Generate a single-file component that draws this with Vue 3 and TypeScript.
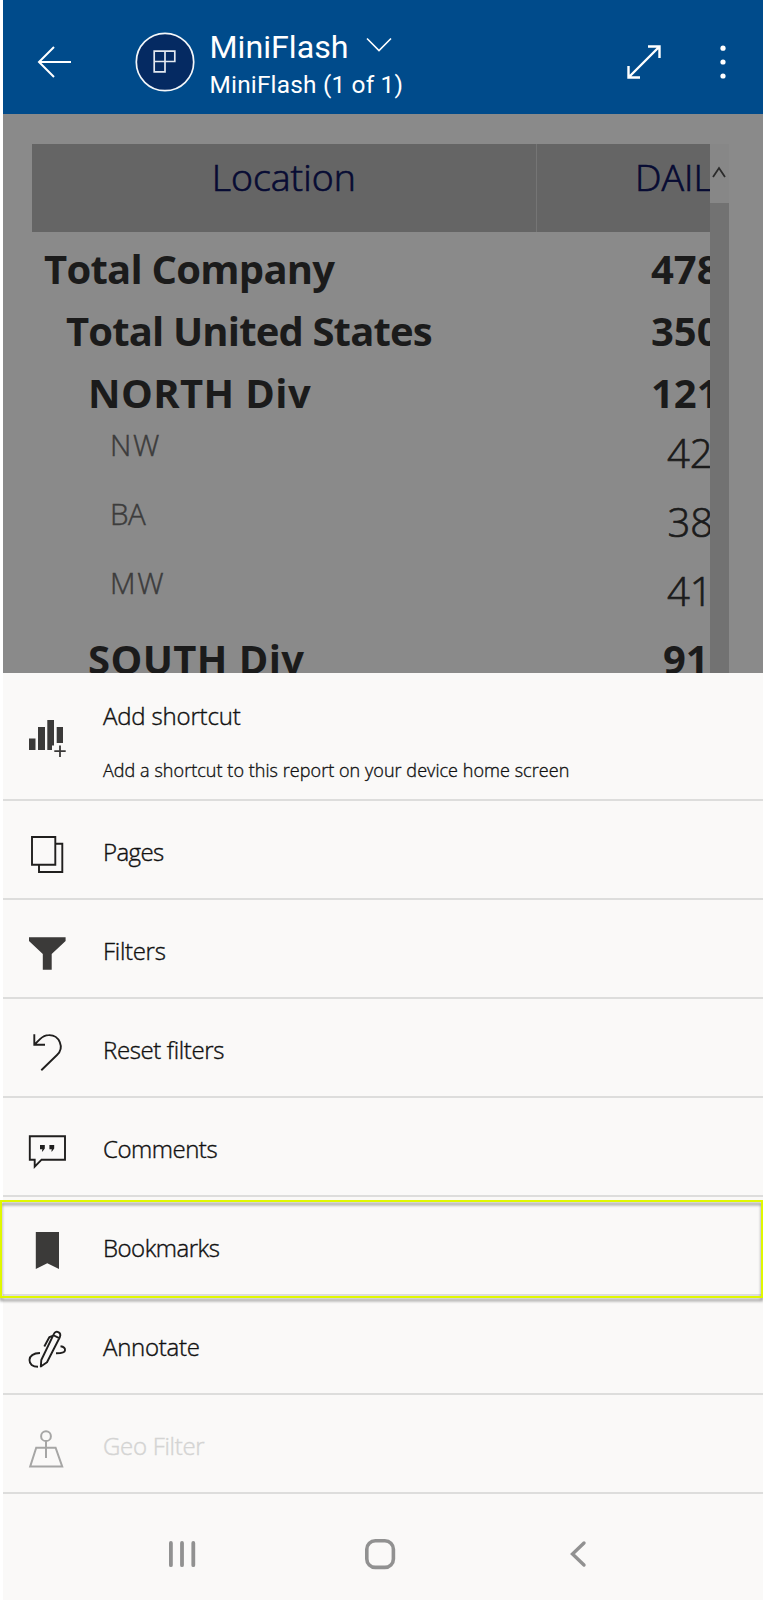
<script setup lang="ts">
interface ReportRow {
  name: string
  value: string
  indent: number
  valueIndent: number
  spacing: number
  kind: 'total' | 'leaf'
}

interface MenuItem {
  label: string
  icon: string
  spacing: number
  disabled?: boolean
  highlighted?: boolean
}

const rows: ReportRow[] = [
  { name: 'Total Company', value: '478', indent: 12, valueIndent: 115, spacing: -0.75, kind: 'total' },
  { name: 'Total United States', value: '350', indent: 34, valueIndent: 115, spacing: -0.85, kind: 'total' },
  { name: 'NORTH Div', value: '121', indent: 56, valueIndent: 115, spacing: 0.4, kind: 'total' },
  { name: 'NW', value: '42', indent: 78, valueIndent: 131, spacing: 1.8, kind: 'leaf' },
  { name: 'BA', value: '38', indent: 78, valueIndent: 131.5, spacing: -0.6, kind: 'leaf' },
  { name: 'MW', value: '41', indent: 78, valueIndent: 131, spacing: 1.8, kind: 'leaf' },
  { name: 'SOUTH Div', value: '91', indent: 56, valueIndent: 127, spacing: 0.4, kind: 'total' },
]

const items: MenuItem[] = [
  { label: 'Pages', icon: 'pages', spacing: -0.6 },
  { label: 'Filters', icon: 'filter', spacing: -0.3 },
  { label: 'Reset filters', icon: 'reset', spacing: -0.37 },
  { label: 'Comments', icon: 'comment', spacing: -0.48 },
  { label: 'Bookmarks', icon: 'bookmark', spacing: -0.5, highlighted: true },
  { label: 'Annotate', icon: 'annotate', spacing: -0.25 },
  { label: 'Geo Filter', icon: 'geo', spacing: -0.3, disabled: true },
]
</script>

<template>
  <div class="screen">
    <header class="bar">
      <svg class="back" width="36" height="34" viewBox="0 0 36 34" fill="none" stroke="#fff" stroke-width="2">
        <path d="M34 17H2M17 2L2 17L17 32" />
      </svg>
      <svg class="badge" width="60" height="60" viewBox="0 0 60 60" fill="none">
        <circle cx="30" cy="30" r="28.7" fill="#052a62" stroke="#f4f7fa" stroke-width="1.7" />
        <path d="M19.2 19.2H39.8V29.5H30V39.8H19.2ZM30 19.2V29.5M19.2 29.5H30" stroke="#e4e9f0" stroke-width="1.7" />
      </svg>
      <div class="titles">
        <div class="title-line">
          <span class="title">MiniFlash</span>
          <svg width="26" height="16" viewBox="0 0 26 16" fill="none" stroke="#fff" stroke-width="1.6">
            <path d="M1 1.5L13 13.5L25 1.5" />
          </svg>
        </div>
        <div class="subtitle">MiniFlash (1 of 1)</div>
      </div>
      <svg class="expand" width="34" height="34" viewBox="0 0 34 34" fill="none" stroke="#fff" stroke-width="2.4">
        <path d="M1.5 32.5L32.5 1.5M21 1.5H32.5V13M1.5 21V32.5H13" />
      </svg>
      <svg class="more" width="6" height="34" viewBox="0 0 6 34" fill="#fff">
        <circle cx="3" cy="3.2" r="2.6" />
        <circle cx="3" cy="17" r="2.6" />
        <circle cx="3" cy="31" r="2.6" />
      </svg>
    </header>

    <section class="report">
      <div class="table">
        <div class="table-head">
          <div class="head-cell location">Location</div>
          <div class="head-cell daily">DAIL</div>
        </div>
        <div v-for="row in rows" :key="row.name" class="row" :class="row.kind">
          <div class="name" :style="{ paddingLeft: row.indent + 'px', letterSpacing: row.spacing + 'px' }">{{ row.name }}</div>
          <div class="value" :style="{ paddingLeft: row.valueIndent + 'px' }">{{ row.value }}</div>
        </div>
      </div>
      <div class="scrollbar">
        <div class="scroll-up">
          <svg width="14" height="12" viewBox="0 0 14 12" fill="none" stroke="#2b2b2b" stroke-width="1.8">
            <path d="M1 11L7 2L13 11" />
          </svg>
        </div>
      </div>
    </section>

    <section class="sheet">
      <div class="item shortcut">
        <svg class="icon" width="40" height="40" viewBox="0 0 40 40" fill="#3b3a39">
          <path d="M1 20.5H7.5V32H1ZM10 9H17V32H10ZM19.3 2H26V27.5H24V32H19.3ZM28.7 9H35V25H28.7Z" />
          <path d="M32 27.5V39M26.3 33.2H37.7" stroke="#3b3a39" stroke-width="1.8" />
        </svg>
        <div class="shortcut-text">
          <div class="label shortcut-label">Add shortcut</div>
          <div class="hint">Add a shortcut to this report on your device home screen</div>
        </div>
      </div>
      <div v-for="item in items" :key="item.label" class="item" :class="{ disabled: item.disabled }">
        <svg class="icon" width="40" height="40" viewBox="0 0 40 40" fill="none" stroke="#201f1e" stroke-width="1.9">
          <path v-if="item.icon === 'pages'" d="M4 3H27.3V30.8H4ZM27.3 9.8H34.3V38H11V30.8" />
          <path v-else-if="item.icon === 'filter'" d="M1 4.3H37.6V8L23.7 21V36.8H14.8V21L1 8Z" fill="#3b3a39" stroke="none" />
          <path v-else-if="item.icon === 'reset'" d="M6.3 2.3V12.7H17M6.3 12.7L12 7.1C15 4.2 17.5 3.1 20.7 3.1A11.5 11.5 0 0 1 29 23L13.3 38.3" />
          <template v-else-if="item.icon === 'comment'">
            <path d="M1.8 5.2H37V28.7H13.6L6.7 35.6V28.7H1.8Z" />
            <path d="M12 14H16.8V17.5L14.6 20.4H13.9L14.4 18.2H12ZM21.4 14H26.2V17.5L24 20.4H23.3L23.8 18.2H21.4Z" fill="#201f1e" stroke="none" />
          </template>
          <path v-else-if="item.icon === 'bookmark'" d="M7.8 2H31V39L19.3 33.2L7.8 39Z" fill="#3b3a39" stroke="none" />
          <path
            v-else-if="item.icon === 'annotate'"
            stroke-linejoin="round"
            d="M12.8 37.5L13.3 31L25.8 5.2C27 2.5 29 2.4 30.3 3.1C32.2 4 32.8 5.8 31.8 8.2L19 33.3L12.8 37.5ZM25 6L31.2 9.2M16.3 17.5L21.3 8.2L24.6 7M12 24C5 24.2 1.8 27 1.5 31C1.4 35 4.5 37.8 10 37.8M32.5 17.3C36 17.7 37.3 19.5 37 21.3C36.7 23.6 34.5 24.3 28 24.2"
          />
          <g v-else stroke="#a6a6a5" stroke-width="2">
            <circle cx="18" cy="8.2" r="4.9" />
            <path d="M18 13V30M8.2 19.7L2.2 38.4H34.2L27.6 19.7Z" />
          </g>
        </svg>
        <span class="label" :style="{ letterSpacing: item.spacing + 'px' }">{{ item.label }}</span>
        <div v-if="item.highlighted" class="highlight"></div>
      </div>
    </section>

    <nav class="system-nav">
      <svg width="32" height="32" viewBox="0 0 32 32" fill="none" stroke="#919191" stroke-width="3.8" stroke-linecap="round">
        <path d="M4.9 5V27.2M16 5V27.2M27.3 5V27.2" />
      </svg>
      <svg width="32" height="32" viewBox="0 0 32 32" fill="none" stroke="#919191" stroke-width="3.6">
        <rect x="2.8" y="2.8" width="26.6" height="26.6" rx="8.5" />
      </svg>
      <svg width="32" height="32" viewBox="0 0 32 32" fill="none" stroke="#919191" stroke-width="3.4" stroke-linecap="round">
        <path d="M22 5L10.5 16.1L22 27" />
      </svg>
    </nav>
  </div>
</template>

<style>
body {
  background: #fff;
}
</style>

<style scoped>
.screen {
  box-sizing: border-box;
  width: 763px;
  height: 1600px;
  padding-left: 3px;
  overflow: hidden;
  display: flex;
  flex-direction: column;
  background: #fff;
  font-family: 'Open Sans', 'Noto Sans', sans-serif;
  font-weight: 300;
}
svg {
  display: block;
  flex: none;
}
.bar {
  flex: none;
  height: 114px;
  padding-top: 10px;
  box-sizing: border-box;
  display: flex;
  align-items: center;
  background: #004b8b;
  color: #fff;
  font-family: Roboto, sans-serif;
  font-weight: 400;
}
.back {
  margin-left: 34px;
}
.badge {
  margin-left: 62px;
}
.titles {
  margin-left: 14.5px;
  width: 400px;
  margin-top: 8px;
}
.title-line {
  display: flex;
  align-items: center;
  gap: 17px;
  height: 38px;
}
.title-line svg {
  margin-top: -4px;
}
.title {
  font-size: 32.2px;
  line-height: 38px;
}
.subtitle {
  font-size: 24.4px;
  letter-spacing: 0.2px;
  line-height: 38px;
}
.expand {
  margin-left: 17.5px;
}
.more {
  margin-left: 58.5px;
}
.report {
  flex: none;
  height: 558.5px;
  box-sizing: border-box;
  padding: 29.5px 0 0 29px;
  display: flex;
  overflow: hidden;
  background: #8a8a8a;
}
.table {
  width: 677.5px;
  overflow: hidden;
  color: #1b1b1b;
}
.table-head {
  display: flex;
  height: 88.5px;
  margin-bottom: 5px;
  background: #656565;
  color: #070b33;
}
.head-cell {
  box-sizing: border-box;
  flex: none;
  font-size: 37.5px;
  line-height: 65px;
  -webkit-text-stroke: 0.7px currentColor;
}
.location {
  width: 504.5px;
  text-align: center;
  border-right: 1px solid #757575;
}
.daily {
  padding-left: 98.5px;
}
.row {
  display: flex;
  white-space: nowrap;
}
.name {
  box-sizing: border-box;
  width: 504px;
  flex: none;
}
.value {
  flex: none;
  font-size: 40px;
}
.total {
  height: 62px;
  line-height: 64px;
  font-size: 40px;
  font-weight: 700;
}
.total:last-child {
  line-height: 58px;
}
.leaf {
  height: 69px;
}
.leaf .name {
  font-size: 29.5px;
  line-height: 43px;
  color: #3c3c3c;
  -webkit-text-stroke: 0.5px currentColor;
}
.leaf .value {
  line-height: 59px;
  -webkit-text-stroke: 0.7px currentColor;
}
.scrollbar {
  width: 19.5px;
  background: #727272;
}
.scroll-up {
  height: 59.5px;
  display: flex;
  justify-content: center;
  padding-top: 22px;
  box-sizing: border-box;
  background: #878787;
}
.sheet {
  flex: none;
  background: #faf9f8;
}
.item {
  position: relative;
  box-sizing: border-box;
  height: 99px;
  padding: 4px 0 0 25px;
  border-bottom: 2px solid #dddddc;
  display: flex;
  align-items: center;
  color: #111;
}
.icon {
  margin-top: 4px;
  margin-right: 35px;
}
.label {
  font-size: 24px;
  line-height: 34px;
  -webkit-text-stroke: 0.4px currentColor;
}
.shortcut {
  height: 128.5px;
  padding-top: 0;
}
.shortcut-text {
  padding-top: 11px;
}
.shortcut-label {
  letter-spacing: -0.17px;
}
.hint {
  margin-top: 24px;
  font-size: 18px;
  letter-spacing: 0.05px;
  line-height: 26px;
  -webkit-text-stroke: 0.35px currentColor;
}
.disabled .label {
  color: #d4d4d3;
}
.highlight {
  position: absolute;
  left: -3px;
  top: 3px;
  width: 763px;
  height: 98px;
  box-sizing: border-box;
  border: 2px solid #e0f800;
  filter: drop-shadow(0 3px 1.5px rgba(0, 0, 0, 0.45));
  z-index: 1;
}
.system-nav {
  flex: 1;
  display: flex;
  justify-content: center;
  align-items: center;
  gap: 166px;
  padding: 14px 6px 0 0;
  background: #faf9f8;
}
</style>
